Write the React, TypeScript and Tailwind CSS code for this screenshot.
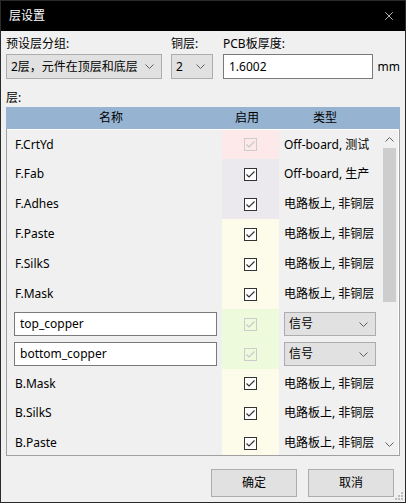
import { X } from "lucide-react";

const font = "font-['Noto_Sans','Noto_Sans_CJK_SC',sans-serif]";

type Row = {
  name: string;
  h: string;
  bg: string;
  on: boolean;
  type: string;
  edit?: boolean;
};

const rows: Row[] = [
  { name: "F.CrtYd", h: "h-[29px]", bg: "bg-[#fde8ea]", on: false, type: "Off-board, 测试" },
  { name: "F.Fab", h: "h-[30px]", bg: "bg-[#ebe9ed]", on: true, type: "Off-board, 生产" },
  { name: "F.Adhes", h: "h-[30px]", bg: "bg-[#ebe9ed]", on: true, type: "电路板上, 非铜层" },
  { name: "F.Paste", h: "h-[30px]", bg: "bg-[#fdfbe9]", on: true, type: "电路板上, 非铜层" },
  { name: "F.SilkS", h: "h-[30px]", bg: "bg-[#fdfbe9]", on: true, type: "电路板上, 非铜层" },
  { name: "F.Mask", h: "h-[30px]", bg: "bg-[#fdfbe9]", on: true, type: "电路板上, 非铜层" },
  { name: "top_copper", h: "h-[30px]", bg: "bg-[#edfbdc]", on: false, type: "信号", edit: true },
  { name: "bottom_copper", h: "h-[30px]", bg: "bg-[#edfbdc]", on: false, type: "信号", edit: true },
  { name: "B.Mask", h: "h-[29px]", bg: "bg-[#fdfbe9]", on: true, type: "电路板上, 非铜层" },
  { name: "B.SilkS", h: "h-[30px]", bg: "bg-[#fdfbe9]", on: true, type: "电路板上, 非铜层" },
  { name: "B.Paste", h: "h-[30px]", bg: "bg-[#fdfbe9]", on: true, type: "电路板上, 非铜层" },
];

function Chevron({ up = false }: { up?: boolean }) {
  return (
    <svg width="9" height="5" viewBox="0 0 9 5" className={up ? "rotate-180" : ""}>
      <polyline points="0.5,0.5 4.5,4.5 8.5,0.5" fill="none" stroke="#606060" strokeWidth="1" />
    </svg>
  );
}

function Check({ on }: { on: boolean }) {
  return (
    <div
      className={`w-[13px] h-[13px] border flex items-center justify-center ${
        on ? "border-[#333333] bg-white" : "border-[#cccccc]"
      }`}
    >
      <svg width="11" height="11" viewBox="0 0 11 11">
        <polyline
          points="1.5,5.5 4,8 9.5,2.5"
          fill="none"
          stroke={on ? "#333333" : "#c8c8c8"}
          strokeWidth="1.2"
        />
      </svg>
    </div>
  );
}

function Combo({ text, w }: { text: string; w: string }) {
  return (
    <div
      className={`${w} h-[25px] bg-[#e1e1e1] border border-[#adadad] flex items-center justify-between pl-[4px] pr-[7px]`}
    >
      <span>{text}</span>
      <Chevron />
    </div>
  );
}

export default function App() {
  return (
    <div
      className={`relative w-[406px] h-[503px] flex flex-col border border-[#2b2b2b] bg-[#f0f0f0] text-[12px] leading-[18px] text-black overflow-hidden ${font}`}
    >
      {/* 标题栏 */}
      <div className="h-[30px] bg-black text-white flex items-center justify-between pl-[8px] pr-[9px] shrink-0">
        <span>层设置</span>
        <X size={14} strokeWidth={1.2} />
      </div>

      <div className="flex-1 px-[5px] pt-[4px] flex flex-col">
        {/* 顶部选项 */}
        <div className="flex items-end">
          <div className="w-[156px]">
            <div className="h-[19px]">预设层分组:</div>
            <Combo text="2层，元件在顶层和底层" w="w-[156px]" />
          </div>
          <div className="ml-[9px] w-[42px]">
            <div className="h-[19px]">铜层:</div>
            <Combo text="2" w="w-[42px]" />
          </div>
          <div className="ml-[10px] w-[151px]">
            <div className="h-[19px]">PCB板厚度:</div>
            <div className="h-[25px] bg-white border border-[#7a7a7a] flex items-center pl-[5px]">1.6002</div>
          </div>
          <div className="ml-[5px] h-[25px] flex items-center">mm</div>
        </div>

        <div className="mt-[10px] h-[18px]">层:</div>

        {/* 表头 */}
        <div className="w-[394px] h-[22px] bg-[#96b4d2] flex items-center">
          <div className="w-[210px] text-center">名称</div>
          <div className="w-[62px] text-center">启用</div>
          <div className="w-[94px] text-center">类型</div>
        </div>

        {/* 表格主体 */}
        <div className="w-[394px] h-[327px] border-l border-r border-b border-[#a0a0a0] flex flex-col overflow-hidden">
          <div className="h-[1px] bg-white shrink-0" />
          <div className="flex flex-1 overflow-hidden">
            <div className="w-[374px] flex flex-col">
              {rows.map((r) => (
                <div key={r.name} className={`flex shrink-0 ${r.h}`}>
                  <div className="w-[215px] flex items-center pl-[7px]">
                    {r.edit ? (
                      <div className="w-[203px] h-[24px] bg-white border border-[#7a7a7a] flex items-center pl-[5px]">
                        {r.name}
                      </div>
                    ) : (
                      <span className="pl-[1px]">{r.name}</span>
                    )}
                  </div>
                  <div className={`w-[57px] flex items-center justify-center ${r.bg}`}>
                    <Check on={r.on} />
                  </div>
                  <div className="w-[102px] flex items-center pl-[5px] whitespace-nowrap overflow-hidden">
                    {r.edit ? (
                      <div className="w-[92px] h-[24px] bg-[#e1e1e1] border border-[#adadad] flex items-center justify-between pl-[4px] pr-[7px]">
                        <span>{r.type}</span>
                        <Chevron />
                      </div>
                    ) : (
                      <span>{r.type}</span>
                    )}
                  </div>
                </div>
              ))}
            </div>
            {/* 滚动条 */}
            <div className="w-[17px] flex flex-col items-center bg-[#f0f0f0]">
              <div className="h-[18px] flex items-center justify-center">
                <Chevron up />
              </div>
              <div className="w-[13px] h-[154px] bg-[#cdcdcd]" />
              <div className="flex-1" />
              <div className="h-[17px] flex items-start justify-center pt-[4px]">
                <Chevron />
              </div>
            </div>
            <div className="w-[1px] bg-white" />
          </div>
        </div>

        {/* 按钮 */}
        <div className="flex justify-end gap-[11px] mt-[13px] pr-[6px]">
          <div className="w-[86px] h-[28px] bg-[#e1e1e1] border border-[#adadad] flex items-center justify-center">确定</div>
          <div className="w-[86px] h-[28px] bg-[#e1e1e1] border border-[#adadad] flex items-center justify-center">取消</div>
        </div>
      </div>

      {/* 尺寸调整手柄 */}
      <svg className="absolute right-[1px] bottom-[1px]" width="10" height="10" viewBox="0 0 10 10">
        {[
          [7, 1],
          [4, 4],
          [7, 4],
          [1, 7],
          [4, 7],
          [7, 7],
        ].map(([x, y]) => (
          <rect key={`${x}-${y}`} x={x} y={y} width="2" height="2" fill="#bcbcbc" />
        ))}
      </svg>
    </div>
  );
}
